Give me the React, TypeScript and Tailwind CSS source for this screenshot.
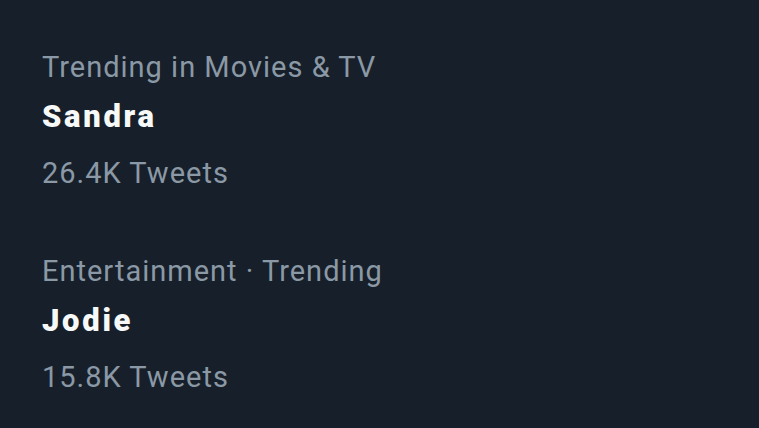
import React from 'react';

const trends = [
  { context: 'Trending in Movies & TV', name: 'Sandra', count: '26.4K Tweets' },
  { context: 'Entertainment · Trending', name: 'Jodie', count: '15.8K Tweets' },
];

const App = () => {
  return (
    <div className="w-[759px] h-[428px] bg-[#17202a] overflow-hidden font-['Roboto',sans-serif]">
      <div className="flex flex-col gap-[62px] pl-[42px] pt-[49px]">
        {trends.map((t) => (
          <div key={t.name} className="flex flex-col">
            <span className="text-[29px] leading-[36px] tracking-[1px] text-[#8b98a5]">{t.context}</span>
            <span className="mt-[14px] text-[31px] leading-[36px] tracking-[2.7px] font-black text-[#f7f9f9]">{t.name}</span>
            <span className="mt-[20px] text-[29px] leading-[36px] tracking-[1px] text-[#8b98a5]">{t.count}</span>
          </div>
        ))}
      </div>
    </div>
  );
};

export default App;
